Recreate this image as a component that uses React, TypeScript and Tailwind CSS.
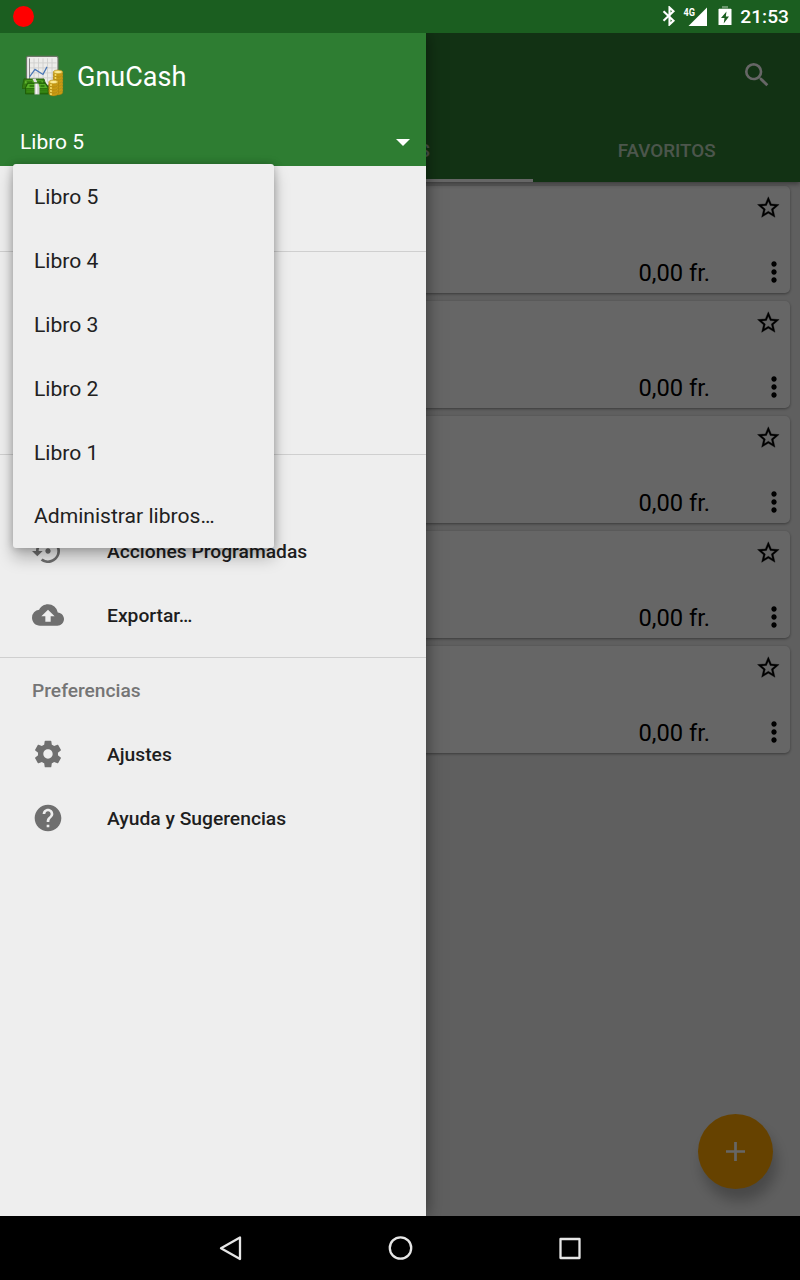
import type { ReactNode } from "react";
import { MdBackup, MdHelp, MdMoreVert, MdSearch, MdSettingsBackupRestore } from "react-icons/md";

const books = ["Libro 5", "Libro 4", "Libro 3", "Libro 2", "Libro 1"];
const balances = ["0,00 fr.", "0,00 fr.", "0,00 fr.", "0,00 fr.", "0,00 fr."];

function SettingsIcon() {
  return (
    <svg viewBox="0 0 24 24" className="size-8" fill="currentColor">
      <path d="M19.43 12.98c.04-.32.07-.64.07-.98s-.03-.66-.07-.98l2.11-1.65c.19-.15.24-.42.12-.64l-2-3.46c-.12-.22-.39-.3-.61-.22l-2.49 1c-.52-.4-1.08-.73-1.69-.98l-.38-2.65C14.46 2.18 14.25 2 14 2h-4c-.25 0-.46.18-.49.42l-.38 2.65c-.61.25-1.17.59-1.69.98l-2.49-1c-.23-.09-.49 0-.61.22l-2 3.46c-.13.22-.07.49.12.64l2.11 1.65c-.04.32-.07.65-.07.98s.03.66.07.98l-2.11 1.65c-.19.15-.24.42-.12.64l2 3.46c.12.22.39.3.61.22l2.49-1c.52.4 1.08.73 1.69.98l.38 2.65c.03.24.24.42.49.42h4c.25 0 .46-.18.49-.42l.38-2.65c.61-.25 1.17-.59 1.69-.98l2.49 1c.23.09.49 0 .61-.22l2-3.46c.12-.22.07-.49-.12-.64l-2.11-1.65zM12 15.5c-1.93 0-3.5-1.57-3.5-3.5s1.57-3.5 3.5-3.5 3.5 1.57 3.5 3.5-1.57 3.5-3.5 3.5z" />
    </svg>
  );
}

function StarIcon() {
  return (
    <svg viewBox="0 0 24 24" className="size-[26px]" fill="currentColor">
      <path d="M22 9.24l-7.19-.62L12 2 9.19 8.63 2 9.24l5.46 4.73L5.82 21 12 17.27 18.18 21l-1.63-7.03L22 9.24zM12 15.4l-3.76 2.27 1-4.28-3.32-2.88 4.38-.38L12 6.1l1.71 4.04 4.38.38-3.32 2.88 1 4.28L12 15.4z" stroke="currentColor" strokeWidth=".3" transform="translate(.3 -.4)" />
    </svg>
  );
}

function Coins({ x, y, count }: { x: number; y: number; count: number }) {
  return (
    <g>
      {Array.from({ length: count }, (_, i) => {
        const cy = y + (count - 1 - i) * 3;
        return (
          <g key={i}>
            <path d={`M${x - 4.7} ${cy}v2.6c0 3.2 9.4 3.2 9.4 0v-2.6z`} fill="#c99a12" stroke="#a0780c" strokeWidth=".4" />
            <path d={`M${x - 2.5} ${cy + 2}v2`} stroke="#f5dc6a" strokeWidth="1.6" />
            <ellipse cx={x} cy={cy} rx="4.7" ry="2" fill="#edcf55" stroke="#a57c12" strokeWidth=".5" />
          </g>
        );
      })}
      <ellipse cx={x} cy={y} rx="3.2" ry="1" fill="#fbeb9c" />
    </g>
  );
}

function GnuCashLogo() {
  return (
    <svg viewBox="0 0 42 42" className="h-[42px] w-[42px] shrink-0">
      <g transform="translate(-.5 -.6)">
        <rect x="5" y="2" width="31.5" height="29" rx="1.5" fill="#ececea" stroke="#6f7569" strokeWidth="1.2" />
        <path d="M12.5 4v24M17 4v24M21.500 4v24M26 4v24M30.500 4v24M8 8.500h27M8 13.500h27M8 18.500h27M8 23.500h27" stroke="#cfcfcd" strokeWidth=".9" />
        <path d="M8 4v22" stroke="#777" strokeWidth=".9" />
        <path d="M8 22.500l5.500-7.500 8 5 4-7.500" fill="none" stroke="#4775b5" strokeWidth="1.2" />
        <path d="M2.500 24.500h20l3 9.500H.5z" fill="#357d12" stroke="#23600a" strokeWidth=".8" />
        <path d="M4 26h17l1 3H3z" fill="#61b72d" />
        <path d="M5 27.500h6m4 0h5" stroke="#28700c" strokeWidth="1.300" />
        <path d="M11 24.500l3-.5 2 4h-3z" fill="#ddd" />
        <path d="M6 28.500h18l3 5v6H4v-6z" fill="#2c760c" stroke="#1c5705" strokeWidth=".8" />
        <path d="M6.500 29.500h17l2.500 4H4.500z" fill="#55ad26" />
        <path d="M8 31.500h5m6 0h4" stroke="#28700c" strokeWidth="1.500" />
        <path d="M5 35.500h21M5 37.500h21" stroke="#479c20" strokeWidth=".7" />
        <path d="M13 29h4l1 4v7h-5z" fill="#d2d0d0" />
        <path d="M15 29.500v10" stroke="#f7f7f7" strokeWidth="1.500" />
        <Coins x={36.5} y={17.5} count={7} />
        <Coins x={32} y={27.5} count={4} />
      </g>
    </svg>
  );
}

function StatusBar() {
  return (
    <header className="flex h-[33px] shrink-0 items-center bg-[#1b5e20] pr-[11px] pl-[13px] text-white">
      <div className="size-[21px] rounded-full bg-[#ff0000]" />
      <div className="ml-auto flex items-center">
        <svg viewBox="0 0 14 20" className="mr-[7px] mb-px h-5 w-[14px]" fill="none" stroke="currentColor" strokeWidth="2.100">
          <path d="M1.500 5.200l10 9.600-4 3.700V1.500l4 3.700-10 9.600" />
        </svg>
        <svg viewBox="0 0 25 20" className="mr-[10px] h-5 w-[25px]">
          <path d="M24 .5v18.500H5.500z" fill="currentColor" />
          <path d="M0 0h13v9.500H0z" fill="#1b5e20" />
          <text x=".5" y="8.800" fill="currentColor" className="font-[Roboto] text-[10px] font-bold" textLength="11.500" lengthAdjust="spacingAndGlyphs">4G</text>
        </svg>
        <svg viewBox="0 0 14 20" className="mr-[8px] mb-px h-5 w-[14px]">
          <path d="M4 0h6v2.200h3V4H1V2.200h3z" fill="#fff" opacity=".35" />
          <path fillRule="evenodd" d="M.5 3h13v16H.5zM8.500 5.500L3 12h3.500l-.8 5.500L11 10.500H7.800z" fill="currentColor" />
        </svg>
        <span className="pt-px text-[19.200px] leading-none font-medium">21:53</span>
      </div>
    </header>
  );
}

function Accounts() {
  return (
    <main className="flex h-full flex-col bg-[#eeeeee]">
      <div className="z-10 flex h-[149px] shrink-0 flex-col bg-[#2e7d32] text-white shadow-[0_2px_5px_rgba(0,0,0,0.4)]">
        <div className="flex h-[85px] items-center justify-end pr-[27px] pb-[2px]">
          <MdSearch className="size-8" />
        </div>
        <div className="grid flex-1 grid-cols-3 text-[18.800px] font-medium">
          <div />
          <div className="flex items-center justify-center border-b-[3px] border-white pt-[5px] text-white/70">TODAS</div>
          <div className="flex items-center justify-center pt-[2px] text-white/70">FAVORITOS</div>
        </div>
      </div>
      <div className="flex flex-col gap-2 px-[10px] pt-1">
        {balances.map((balance, i) => (
          <div key={i} className="flex h-[107px] flex-col justify-between rounded-[5px] bg-white shadow-[0_1px_3px_rgba(0,0,0,0.4)]">
            <div className="flex justify-end pt-[9px] pr-[9px]"><StarIcon /></div>
            <div className="flex items-center justify-end pb-[5px]">
              <span className="mr-[48px] h-8 text-[23.700px] leading-[34px]">{balance}</span>
              <MdMoreVert className="size-8" />
            </div>
          </div>
        ))}
      </div>
    </main>
  );
}

function DrawerItem({ icon, label }: { icon: ReactNode; label: string }) {
  return (
    <div className="flex h-16 items-center gap-[43px] pl-8">
      <span className="text-[#6f6f6f]">{icon}</span>
      <span className="pt-[2px] text-[19.250px] font-medium text-[#1e1e1e]">{label}</span>
    </div>
  );
}

function Drawer() {
  return (
    <aside className="absolute inset-y-0 left-0 flex w-[426px] flex-col bg-[#eeeeee] shadow-[0_0_16px_rgba(0,0,0,0.5)]">
      <div className="flex h-[133px] shrink-0 flex-col bg-[#2e7d32] text-white">
        <div className="flex h-[85px] items-center gap-[13px] pl-[22px]">
          <GnuCashLogo />
          <h1 className="pt-[3px] text-[27px] leading-none">GnuCash</h1>
        </div>
        <div className="flex h-12 items-center justify-between pr-4 pl-5">
          <span className="pt-[2px] text-[21px]">Libro 5</span>
          <svg viewBox="0 0 14 7" className="h-[7px] w-[14px]"><path d="M0 0h14L7 7z" fill="currentColor" /></svg>
        </div>
      </div>
      <div className="h-[86px] shrink-0 border-b border-[#cfcfcf]" />
      <div className="h-[203px] shrink-0 border-b border-[#cfcfcf]" />
      <section className="h-[203px] shrink-0 border-b border-[#cfcfcf] pt-16">
        <DrawerItem icon={<MdSettingsBackupRestore className="size-8" />} label="Acciones Programadas" />
        <DrawerItem icon={<MdBackup className="size-8" />} label="Exportar…" />
      </section>
      <section>
        <h2 className="flex h-16 items-center pt-[2px] pl-8 text-[19.200px] font-medium text-[#757575]">Preferencias</h2>
        <DrawerItem icon={<SettingsIcon />} label="Ajustes" />
        <DrawerItem icon={<MdHelp className="size-8" />} label="Ayuda y Sugerencias" />
      </section>
      <ul className="absolute top-[131px] left-[13px] w-[261px] rounded-[3px] bg-[#eeeeee] text-[21.100px] text-[#212121] shadow-[0_10px_16px_rgba(0,0,0,0.25),0_0_8px_rgba(0,0,0,0.25)]">
        {books.map((book) => (
          <li key={book} className="flex h-16 items-center pt-[2px] pl-[21px]">{book}</li>
        ))}
        <li className="flex h-16 items-center pl-[21px]">Administrar libros…</li>
      </ul>
    </aside>
  );
}

function NavigationBar() {
  return (
    <nav className="flex h-16 shrink-0 items-center justify-center gap-[138px] bg-black text-[#e6e6e6]">
      <svg viewBox="0 0 32 32" className="size-8" fill="none" stroke="currentColor" strokeWidth="2.300" strokeLinejoin="round"><path d="M26 5.500v21.500L7 16.300z" /></svg>
      <svg viewBox="0 0 32 32" className="size-8" fill="none" stroke="currentColor" strokeWidth="2.300"><circle cx="16.500" cy="16" r="10.700" /></svg>
      <svg viewBox="0 0 32 32" className="size-8" fill="none" stroke="currentColor" strokeWidth="2.300" strokeLinejoin="round"><path d="M6.500 7h19v19h-19z" /></svg>
    </nav>
  );
}

export default function App() {
  return (
    <div className="flex h-[1280px] w-[800px] flex-col overflow-hidden font-[Roboto,sans-serif] text-black">
      <StatusBar />
      <div className="relative min-h-0 flex-1 overflow-hidden">
        <Accounts />
        <button className="absolute right-[27px] bottom-[27px] z-10 flex size-[75px] items-center justify-center rounded-full bg-[#ffa500] shadow-[4px_12px_14px_rgba(0,0,0,0.25)]">
          <svg viewBox="0 0 19 19" className="size-[19px]" stroke="white" strokeWidth="2.700"><path d="M9.500 0v19M0 9.500h19" /></svg>
        </button>
        <div className="absolute inset-0 z-20 bg-black/60" />
        <div className="absolute inset-0 z-30">
          <Drawer />
        </div>
      </div>
      <NavigationBar />
    </div>
  );
}
